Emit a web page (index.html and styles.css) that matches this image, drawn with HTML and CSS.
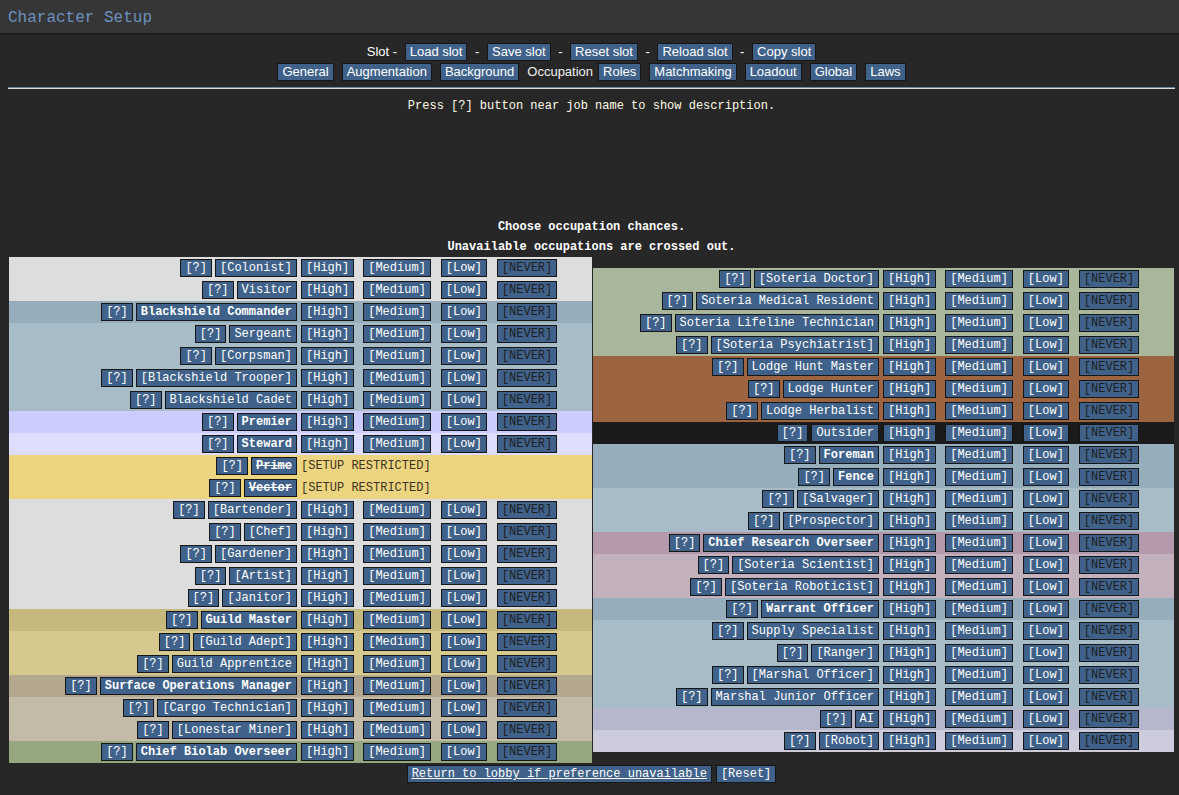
FILE: index.html
```html
<!DOCTYPE html>
<html>
<head>
<meta charset="utf-8">
<title>Character Setup</title>
<link rel="stylesheet" href="styles.css">
</head>
<body>
<div class="titlebar"><span class="title">Character Setup</span></div>
<div class="content">
  <div class="slotbar">Slot - <a class="tb">Load slot</a> - <a class="tb">Save slot</a> - <a class="tb">Reset slot</a> - <a class="tb">Reload slot</a> - <a class="tb">Copy slot</a></div>
  <div class="tabs">
    <a class="tb">General</a>
    <a class="tb">Augmentation</a>
    <a class="tb">Background</a>
    <span class="cur">Occupation</span>
    <a class="tb">Roles</a>
    <a class="tb">Matchmaking</a>
    <a class="tb">Loadout</a>
    <a class="tb">Global</a>
    <a class="tb">Laws</a>
  </div>
  <div class="rule"></div>
  <div class="hint">Press [?] button near job name to show description.</div>
  <div class="desc"></div>
  <div class="choose">Choose occupation chances.<br>Unavailable occupations are crossed out.</div>

  <div class="jobs">
    <div class="col left">
      <div class="row c-grey"><div class="name"><a class="b">[?]</a><a class="b">[Colonist]</a></div><div class="lv"><a class="b">[High]</a><a class="b">[Medium]</a><a class="b">[Low]</a><a class="b nv">[NEVER]</a></div></div>
      <div class="row c-grey"><div class="name"><a class="b">[?]</a><a class="b">Visitor</a></div><div class="lv"><a class="b">[High]</a><a class="b">[Medium]</a><a class="b">[Low]</a><a class="b nv">[NEVER]</a></div></div>
      <div class="row c-steel"><div class="name"><a class="b">[?]</a><a class="b bold">Blackshield Commander</a></div><div class="lv"><a class="b">[High]</a><a class="b">[Medium]</a><a class="b">[Low]</a><a class="b nv">[NEVER]</a></div></div>
      <div class="row c-steel2"><div class="name"><a class="b">[?]</a><a class="b">Sergeant</a></div><div class="lv"><a class="b">[High]</a><a class="b">[Medium]</a><a class="b">[Low]</a><a class="b nv">[NEVER]</a></div></div>
      <div class="row c-steel2"><div class="name"><a class="b">[?]</a><a class="b">[Corpsman]</a></div><div class="lv"><a class="b">[High]</a><a class="b">[Medium]</a><a class="b">[Low]</a><a class="b nv">[NEVER]</a></div></div>
      <div class="row c-steel2"><div class="name"><a class="b">[?]</a><a class="b">[Blackshield Trooper]</a></div><div class="lv"><a class="b">[High]</a><a class="b">[Medium]</a><a class="b">[Low]</a><a class="b nv">[NEVER]</a></div></div>
      <div class="row c-steel2"><div class="name"><a class="b">[?]</a><a class="b">Blackshield Cadet</a></div><div class="lv"><a class="b">[High]</a><a class="b">[Medium]</a><a class="b">[Low]</a><a class="b nv">[NEVER]</a></div></div>
      <div class="row c-lav"><div class="name"><a class="b">[?]</a><a class="b bold">Premier</a></div><div class="lv"><a class="b">[High]</a><a class="b">[Medium]</a><a class="b">[Low]</a><a class="b nv">[NEVER]</a></div></div>
      <div class="row c-lav2"><div class="name"><a class="b">[?]</a><a class="b bold">Steward</a></div><div class="lv"><a class="b">[High]</a><a class="b">[Medium]</a><a class="b">[Low]</a><a class="b nv">[NEVER]</a></div></div>
      <div class="row c-yellow"><div class="name"><a class="b">[?]</a><a class="b bold strike">Prime</a></div><div class="lv"><span class="restricted">[SETUP RESTRICTED]</span></div></div>
      <div class="row c-yellow"><div class="name"><a class="b">[?]</a><a class="b bold strike">Vector</a></div><div class="lv"><span class="restricted">[SETUP RESTRICTED]</span></div></div>
      <div class="row c-grey"><div class="name"><a class="b">[?]</a><a class="b">[Bartender]</a></div><div class="lv"><a class="b">[High]</a><a class="b">[Medium]</a><a class="b">[Low]</a><a class="b nv">[NEVER]</a></div></div>
      <div class="row c-grey"><div class="name"><a class="b">[?]</a><a class="b">[Chef]</a></div><div class="lv"><a class="b">[High]</a><a class="b">[Medium]</a><a class="b">[Low]</a><a class="b nv">[NEVER]</a></div></div>
      <div class="row c-grey"><div class="name"><a class="b">[?]</a><a class="b">[Gardener]</a></div><div class="lv"><a class="b">[High]</a><a class="b">[Medium]</a><a class="b">[Low]</a><a class="b nv">[NEVER]</a></div></div>
      <div class="row c-grey"><div class="name"><a class="b">[?]</a><a class="b">[Artist]</a></div><div class="lv"><a class="b">[High]</a><a class="b">[Medium]</a><a class="b">[Low]</a><a class="b nv">[NEVER]</a></div></div>
      <div class="row c-grey"><div class="name"><a class="b">[?]</a><a class="b">[Janitor]</a></div><div class="lv"><a class="b">[High]</a><a class="b">[Medium]</a><a class="b">[Low]</a><a class="b nv">[NEVER]</a></div></div>
      <div class="row c-guild"><div class="name"><a class="b">[?]</a><a class="b bold">Guild Master</a></div><div class="lv"><a class="b">[High]</a><a class="b">[Medium]</a><a class="b">[Low]</a><a class="b nv">[NEVER]</a></div></div>
      <div class="row c-guild2"><div class="name"><a class="b">[?]</a><a class="b">[Guild Adept]</a></div><div class="lv"><a class="b">[High]</a><a class="b">[Medium]</a><a class="b">[Low]</a><a class="b nv">[NEVER]</a></div></div>
      <div class="row c-guild2"><div class="name"><a class="b">[?]</a><a class="b">Guild Apprentice</a></div><div class="lv"><a class="b">[High]</a><a class="b">[Medium]</a><a class="b">[Low]</a><a class="b nv">[NEVER]</a></div></div>
      <div class="row c-cargo"><div class="name"><a class="b">[?]</a><a class="b bold">Surface Operations Manager</a></div><div class="lv"><a class="b">[High]</a><a class="b">[Medium]</a><a class="b">[Low]</a><a class="b nv">[NEVER]</a></div></div>
      <div class="row c-cargo2"><div class="name"><a class="b">[?]</a><a class="b">[Cargo Technician]</a></div><div class="lv"><a class="b">[High]</a><a class="b">[Medium]</a><a class="b">[Low]</a><a class="b nv">[NEVER]</a></div></div>
      <div class="row c-cargo2"><div class="name"><a class="b">[?]</a><a class="b">[Lonestar Miner]</a></div><div class="lv"><a class="b">[High]</a><a class="b">[Medium]</a><a class="b">[Low]</a><a class="b nv">[NEVER]</a></div></div>
      <div class="row c-bio"><div class="name"><a class="b">[?]</a><a class="b bold">Chief Biolab Overseer</a></div><div class="lv"><a class="b">[High]</a><a class="b">[Medium]</a><a class="b">[Low]</a><a class="b nv">[NEVER]</a></div></div>
    </div>
    <div class="col right">
      <div class="row c-sot"><div class="name"><a class="b">[?]</a><a class="b">[Soteria Doctor]</a></div><div class="lv"><a class="b">[High]</a><a class="b">[Medium]</a><a class="b">[Low]</a><a class="b nv">[NEVER]</a></div></div>
      <div class="row c-sot"><div class="name"><a class="b">[?]</a><a class="b">Soteria Medical Resident</a></div><div class="lv"><a class="b">[High]</a><a class="b">[Medium]</a><a class="b">[Low]</a><a class="b nv">[NEVER]</a></div></div>
      <div class="row c-sot"><div class="name"><a class="b">[?]</a><a class="b">Soteria Lifeline Technician</a></div><div class="lv"><a class="b">[High]</a><a class="b">[Medium]</a><a class="b">[Low]</a><a class="b nv">[NEVER]</a></div></div>
      <div class="row c-sot"><div class="name"><a class="b">[?]</a><a class="b">[Soteria Psychiatrist]</a></div><div class="lv"><a class="b">[High]</a><a class="b">[Medium]</a><a class="b">[Low]</a><a class="b nv">[NEVER]</a></div></div>
      <div class="row c-lodge"><div class="name"><a class="b">[?]</a><a class="b">Lodge Hunt Master</a></div><div class="lv"><a class="b">[High]</a><a class="b">[Medium]</a><a class="b">[Low]</a><a class="b nv">[NEVER]</a></div></div>
      <div class="row c-lodge"><div class="name"><a class="b">[?]</a><a class="b">Lodge Hunter</a></div><div class="lv"><a class="b">[High]</a><a class="b">[Medium]</a><a class="b">[Low]</a><a class="b nv">[NEVER]</a></div></div>
      <div class="row c-lodge"><div class="name"><a class="b">[?]</a><a class="b">Lodge Herbalist</a></div><div class="lv"><a class="b">[High]</a><a class="b">[Medium]</a><a class="b">[Low]</a><a class="b nv">[NEVER]</a></div></div>
      <div class="row c-black"><div class="name"><a class="b">[?]</a><a class="b">Outsider</a></div><div class="lv"><a class="b">[High]</a><a class="b">[Medium]</a><a class="b">[Low]</a><a class="b nv">[NEVER]</a></div></div>
      <div class="row c-steel"><div class="name"><a class="b">[?]</a><a class="b bold">Foreman</a></div><div class="lv"><a class="b">[High]</a><a class="b">[Medium]</a><a class="b">[Low]</a><a class="b nv">[NEVER]</a></div></div>
      <div class="row c-steel"><div class="name"><a class="b">[?]</a><a class="b bold">Fence</a></div><div class="lv"><a class="b">[High]</a><a class="b">[Medium]</a><a class="b">[Low]</a><a class="b nv">[NEVER]</a></div></div>
      <div class="row c-steel2"><div class="name"><a class="b">[?]</a><a class="b">[Salvager]</a></div><div class="lv"><a class="b">[High]</a><a class="b">[Medium]</a><a class="b">[Low]</a><a class="b nv">[NEVER]</a></div></div>
      <div class="row c-steel2"><div class="name"><a class="b">[?]</a><a class="b">[Prospector]</a></div><div class="lv"><a class="b">[High]</a><a class="b">[Medium]</a><a class="b">[Low]</a><a class="b nv">[NEVER]</a></div></div>
      <div class="row c-sci"><div class="name"><a class="b">[?]</a><a class="b bold">Chief Research Overseer</a></div><div class="lv"><a class="b">[High]</a><a class="b">[Medium]</a><a class="b">[Low]</a><a class="b nv">[NEVER]</a></div></div>
      <div class="row c-sci2"><div class="name"><a class="b">[?]</a><a class="b">[Soteria Scientist]</a></div><div class="lv"><a class="b">[High]</a><a class="b">[Medium]</a><a class="b">[Low]</a><a class="b nv">[NEVER]</a></div></div>
      <div class="row c-sci2"><div class="name"><a class="b">[?]</a><a class="b">[Soteria Roboticist]</a></div><div class="lv"><a class="b">[High]</a><a class="b">[Medium]</a><a class="b">[Low]</a><a class="b nv">[NEVER]</a></div></div>
      <div class="row c-steel"><div class="name"><a class="b">[?]</a><a class="b bold">Warrant Officer</a></div><div class="lv"><a class="b">[High]</a><a class="b">[Medium]</a><a class="b">[Low]</a><a class="b nv">[NEVER]</a></div></div>
      <div class="row c-steel2"><div class="name"><a class="b">[?]</a><a class="b">Supply Specialist</a></div><div class="lv"><a class="b">[High]</a><a class="b">[Medium]</a><a class="b">[Low]</a><a class="b nv">[NEVER]</a></div></div>
      <div class="row c-steel2"><div class="name"><a class="b">[?]</a><a class="b">[Ranger]</a></div><div class="lv"><a class="b">[High]</a><a class="b">[Medium]</a><a class="b">[Low]</a><a class="b nv">[NEVER]</a></div></div>
      <div class="row c-steel2"><div class="name"><a class="b">[?]</a><a class="b">[Marshal Officer]</a></div><div class="lv"><a class="b">[High]</a><a class="b">[Medium]</a><a class="b">[Low]</a><a class="b nv">[NEVER]</a></div></div>
      <div class="row c-steel2"><div class="name"><a class="b">[?]</a><a class="b">Marshal Junior Officer</a></div><div class="lv"><a class="b">[High]</a><a class="b">[Medium]</a><a class="b">[Low]</a><a class="b nv">[NEVER]</a></div></div>
      <div class="row c-ai"><div class="name"><a class="b">[?]</a><a class="b">AI</a></div><div class="lv"><a class="b">[High]</a><a class="b">[Medium]</a><a class="b">[Low]</a><a class="b nv">[NEVER]</a></div></div>
      <div class="row c-robot"><div class="name"><a class="b">[?]</a><a class="b">[Robot]</a></div><div class="lv"><a class="b">[High]</a><a class="b">[Medium]</a><a class="b">[Low]</a><a class="b nv">[NEVER]</a></div></div>
    </div>
  </div>

  <div class="footer"><a class="b under">Return to lobby if preference unavailable</a><a class="b">[Reset]</a></div>
</div>
</body>
</html>
```

FILE: styles.css
```css
html, body {
  margin: 0;
  padding: 0;
  background: #272727;
  height: 100%;
}
body {
  font-family: "Liberation Mono", "Courier New", monospace;
  font-size: 12px;
  color: #ffffff;
  overflow: hidden;
}
.titlebar {
  height: 33px;
  background: #363636;
  border-bottom: 2px solid #1e1e1e;
  display: flex;
  align-items: center;
  padding-left: 8px;
}
.title {
  font-family: "Liberation Mono", "Courier New", monospace;
  font-size: 16px;
  color: #6d90c0;
  position: relative;
  top: 1px;
}
.content {
  padding: 7px 4px 0 8px;
}
.slotbar, .tabs {
  font-family: "Liberation Sans", Arial, sans-serif;
  font-size: 13px;
  color: #ffffff;
  text-align: center;
  height: 20px;
  line-height: 18px;
  display: flex;
  justify-content: center;
  align-items: center;
}
.slotbar {
  gap: 4px;
  white-space: pre;
}
.tabs {
  gap: 8px;
}
.tabs .cur {
  margin-right: -3px;
  color: #f0f0f0;
}
.tb {
  display: inline-block;
  background: #40628a;
  border: 1px solid #161616;
  color: #ffffff;
  padding: 0 4px;
  height: 16px;
  line-height: 16px;
}
.rule {
  margin-top: 5px;
  height: 1px;
  background: #6f819a;
  border-bottom: 1px solid #d8dce4;
}
.hint {
  margin-top: 9px;
  text-align: center;
  line-height: 16px;
  color: #fffbe8;
}
.desc {
  height: 103px;
}
.choose {
  text-align: center;
  font-weight: bold;
  line-height: 20px;
  color: #ffffff;
}
.jobs {
  display: flex;
  align-items: center;
  gap: 1px;
  margin: 0 0 0 1px;
}
.col.left { width: 583px; }
.col.right { width: 581px; }
.row {
  height: 22px;
  display: flex;
  align-items: center;
}
.name {
  display: flex;
  justify-content: flex-end;
  gap: 3px;
  padding-right: 2px;
  box-sizing: border-box;
}
.left .name { width: 290px; }
.right .name { width: 288px; }
.lv {
  display: flex;
  gap: 9px;
  padding-left: 2px;
}
.lv .b:nth-child(3), .lv .b:nth-child(4) { margin-left: 1px; }
.b {
  display: inline-block;
  background: #40628a;
  border: 1px solid #161616;
  color: #ffffff;
  padding: 0 4px;
  height: 16px;
  line-height: 16px;
  white-space: pre;
}
.b.nv { color: #1e1e1e; }
.bold { font-weight: bold; }
.strike { text-decoration: line-through; }
.under { text-decoration: underline; }
.restricted {
  color: #3b3320;
  line-height: 16px;
}
.footer {
  display: flex;
  justify-content: center;
  gap: 4px;
  margin-top: 2px;
}

.c-grey { background: #dddddd; }
.c-steel { background: #96adbb; }
.c-steel2 { background: #a8bcc7; }
.c-lav { background: #ccccff; }
.c-lav2 { background: #ddddff; }
.c-yellow { background: #edd480; }
.c-guild { background: #c5b97d; }
.c-guild2 { background: #d5c98e; }
.c-cargo { background: #b3a78f; }
.c-cargo2 { background: #c4baa8; }
.c-bio { background: #94a77f; }
.c-sot { background: #a8b79b; }
.c-lodge { background: #9c6441; }
.c-black { background: #1b1b1b; }
.c-sci { background: #b498ab; }
.c-sci2 { background: #c3b2bd; }
.c-ai { background: #b6b7cc; }
.c-robot { background: #ccccdd; }
```
